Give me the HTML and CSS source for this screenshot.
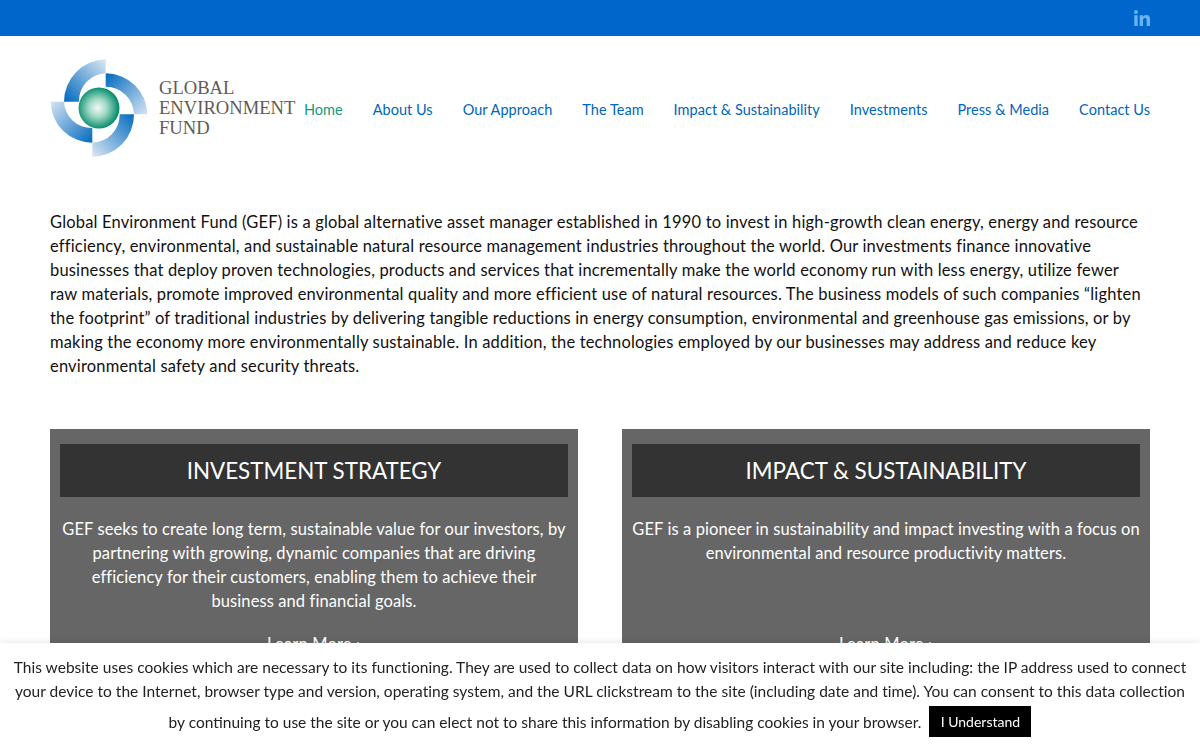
FILE: index.html
```html
<!DOCTYPE html>
<html lang="en">
<head>
<meta charset="utf-8">
<title>Global Environment Fund</title>
<link rel="stylesheet" href="styles.css">
</head>
<body>
<div class="topbar">
  <a class="linkedin" href="#" aria-label="LinkedIn">
    <svg width="16" height="16" viewBox="0 0 16 16"><path fill="#66b5f2" d="M0.3 5.3h3.3V16H0.3zM1.95 0a1.95 1.95 0 1 1 0 3.9 1.95 1.95 0 0 1 0-3.9zM5.7 5.3h3.2v1.5c.5-.9 1.6-1.8 3.3-1.8 3.4 0 3.8 2.2 3.8 5.1V16h-3.3v-5.1c0-1.3 0-2.9-1.7-2.9s-2 1.4-2 2.8V16H5.7z"/></svg>
  </a>
</div>
<header class="header">
  <a class="logo" href="#">
    <svg class="logo-mark" width="100" height="100" viewBox="51 58 100 100">
      <defs>
        <linearGradient id="g1" gradientUnits="userSpaceOnUse" x1="68" y1="100" x2="106" y2="62"><stop offset="0" stop-color="#0a6fc0"/><stop offset="1" stop-color="#d5e3f3"/></linearGradient>
        <linearGradient id="g2" gradientUnits="userSpaceOnUse" x1="108" y1="76" x2="148" y2="114"><stop offset="0" stop-color="#0a6fc0"/><stop offset="1" stop-color="#d5e3f3"/></linearGradient>
        <linearGradient id="g3" gradientUnits="userSpaceOnUse" x1="134" y1="116" x2="94" y2="155"><stop offset="0" stop-color="#0a6fc0"/><stop offset="1" stop-color="#d5e3f3"/></linearGradient>
        <linearGradient id="g4" gradientUnits="userSpaceOnUse" x1="92" y1="141" x2="52" y2="102"><stop offset="0" stop-color="#0a6fc0"/><stop offset="1" stop-color="#d5e3f3"/></linearGradient>
        <radialGradient id="ball" cx="0.47" cy="0.5" r="0.5"><stop offset="0" stop-color="#f4f8f7"/><stop offset="0.45" stop-color="#9fd8c4"/><stop offset="1" stop-color="#0b8f70"/></radialGradient>
      </defs>
      <path fill="url(#g1)" d="M106.7 59.3A42.4 42.4 0 0 0 65 101.7H80A27.5 27.5 0 0 1 106.7 73.3Z"/>
      <path fill="url(#g2)" d="M106.7 73.3A41.5 41.5 0 0 1 148.3 114.3H135A28.3 28.3 0 0 0 106.7 86.7Z"/>
      <path fill="url(#g3)" d="M135 114.3A42 42 0 0 1 93.3 156.7V142.7A28 28 0 0 0 120.7 114.3Z"/>
      <path fill="url(#g4)" d="M93.3 142.7A41.5 41.5 0 0 1 51.7 101.7H65A27.5 27.5 0 0 0 93.3 128Z"/>
      <circle cx="100" cy="108" r="20.5" fill="url(#ball)"/>
    </svg>
    <span class="logo-text"><span>GLOBAL</span><span>ENVIRONMENT</span><span>FUND</span></span>
  </a>
  <nav class="nav">
    <a class="active" href="#">Home</a>
    <a href="#">About Us</a>
    <a href="#">Our Approach</a>
    <a href="#">The Team</a>
    <a href="#">Impact &amp; Sustainability</a>
    <a href="#">Investments</a>
    <a href="#">Press &amp; Media</a>
    <a href="#">Contact Us</a>
  </nav>
</header>
<main class="main">
  <p class="intro">Global Environment Fund (GEF) is a global alternative asset manager established in 1990 to invest in high-growth clean energy, energy and resource<br>efficiency, environmental, and sustainable natural resource management industries throughout the world. Our investments finance innovative<br>businesses that deploy proven technologies, products and services that incrementally make the world economy run with less energy, utilize fewer<br>raw materials, promote improved environmental quality and more efficient use of natural resources. The business models of such companies “lighten<br>the footprint” of traditional industries by delivering tangible reductions in energy consumption, environmental and greenhouse gas emissions, or by<br>making the economy more environmentally sustainable. In addition, the technologies employed by our businesses may address and reduce key<br>environmental safety and security threats.</p>
  <div class="cards">
    <section class="card">
      <h2>INVESTMENT STRATEGY</h2>
      <p>GEF seeks to create long term, sustainable value for our investors, by<br>partnering with growing, dynamic companies that are driving<br>efficiency for their customers, enabling them to achieve their<br>business and financial goals.</p>
      <a class="more" href="#">Learn More ›</a>
    </section>
    <section class="card">
      <h2>IMPACT &amp; SUSTAINABILITY</h2>
      <p>GEF is a pioneer in sustainability and impact investing with a focus on<br>environmental and resource productivity matters.</p>
      <a class="more" href="#">Learn More ›</a>
    </section>
  </div>
</main>
<div class="cookie">
  <p class="cookie-text">This website uses cookies which are necessary to its functioning. They are used to collect data on how visitors interact with our site including: the IP address used to connect<br>your device to the Internet, browser type and version, operating system, and the URL clickstream to the site (including date and time). You can consent to this data collection</p>
  <div class="cookie-last"><span>by continuing to use the site or you can elect not to share this information by disabling cookies in your browser.</span><button class="accept">I Understand</button></div>
</div>
</body>
</html>
```
FILE: styles.css
```css
* { box-sizing: border-box; }
html, body { height: 100%; }
body {
  margin: 0;
  overflow: hidden;
  background: #fff;
  color: #111;
  font-family: Lato, "Open Sans", sans-serif;
  font-size: 16.5px;
  letter-spacing: 0.17px;
  line-height: 24px;
}
a { text-decoration: none; color: inherit; }
.topbar {
  height: 36px;
  background: #0066cc;
  padding: 0 50px;
  display: flex;
  align-items: center;
  justify-content: flex-end;
}
.linkedin { display: flex; }
.header {
  height: 144px;
  padding: 22px 50px 0;
  display: flex;
  justify-content: space-between;
}
.logo { display: flex; align-items: flex-start; }
.logo-mark { display: block; }
.logo-text {
  display: flex;
  flex-direction: column;
  margin: 20px 0 0 9px;
  font-family: "Liberation Serif", serif;
  font-size: 18.6px;
  line-height: 20px;
  letter-spacing: 0;
  color: #625a56;
  white-space: nowrap;
}
.nav {
  display: flex;
  gap: 30px;
  margin-top: 40px;
  font-size: 14.5px;
  letter-spacing: 0.03px;
  color: #0066bb;
  align-items: flex-start;
  white-space: nowrap;
}
.active { color: #149a7c; }
.main { padding: 30px 50px 0; }
.intro { margin: 0; color: #111; white-space: nowrap; }
.cards {
  display: flex;
  gap: 44px;
  margin-top: 51px;
}
.card {
  flex: 1 1 0;
  min-width: 0;
  background: #666;
  color: #fff;
  padding: 15px 10px;
  text-align: center;
  height: 300px;
}
.card h2 {
  margin: 0;
  height: 53px;
  line-height: 53px;
  background: #333;
  font-size: 22.4px;
  font-weight: 400;
  letter-spacing: 0;
}
.card p { margin: 20px 0 0; height: 96px; white-space: nowrap; letter-spacing: 0.1px; }
.more { display: block; margin-top: 19px; }
.cookie {
  position: fixed;
  left: 0;
  right: 0;
  bottom: 0;
  height: 107px;
  background: #fff;
  box-shadow: 0 0 8px rgba(0,0,0,.12);
  text-align: center;
  color: #222;
  padding-top: 12px;
  font-size: 15.5px;
  letter-spacing: 0;
}
.cookie-text { margin: 0; white-space: nowrap; letter-spacing: 0.02px; }
.cookie-last {
  display: flex;
  justify-content: center;
  align-items: center;
  gap: 8px;
  margin-top: 3px;
}
.accept {
  width: 102px;
  height: 31px;
  border: 0;
  background: #000;
  color: #fff;
  font: 14px Lato, sans-serif;
}
```
